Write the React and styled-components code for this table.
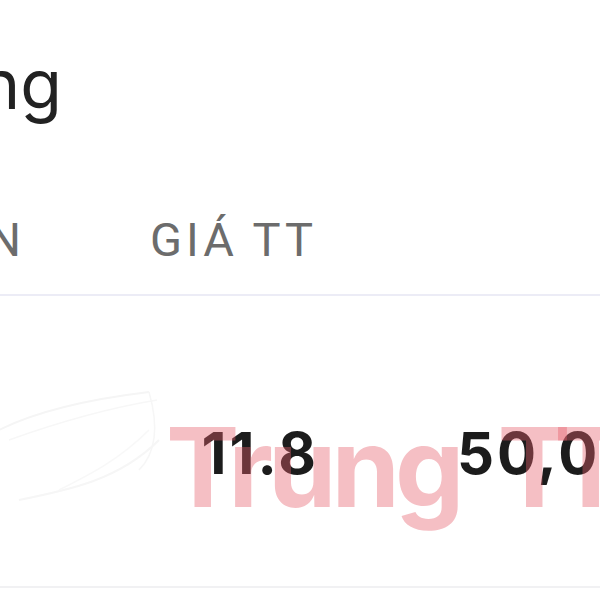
import React from "react";
import styled, { createGlobalStyle } from "styled-components";

const GlobalStyle = createGlobalStyle`
  html, body {
    margin: 0;
    padding: 0;
    background: #ffffff;
    overflow: hidden;
  }
  body {
    font-family: "Inter", "Roboto", "Liberation Sans", sans-serif;
  }
`;

const Page = styled.div`
  position: relative;
  width: 600px;
  height: 600px;
  overflow: hidden;
  background: #ffffff;
`;

const Sheet = styled.div`
  margin-left: -300px;
  width: 1400px;
  padding-top: 50px;
`;

const Title = styled.h1`
  margin: 0;
  width: 362px;
  display: flex;
  justify-content: flex-end;
  font-family: "Inter", "Noto Sans", sans-serif;
  font-weight: 400;
  font-size: 68px;
  line-height: 1;
  color: #222222;
  white-space: nowrap;
`;

const Grid = styled.div`
  display: grid;
  grid-template-columns: 325px 288px 787px;
`;

const HeadRow = styled(Grid)`
  margin-top: 98px;
  padding-bottom: 31px;
  border-bottom: 2px solid #ececf6;
`;

const HeadCell = styled.div`
  justify-self: end;
  margin-right: ${(p) => (p.$shift ? "-4px" : "0")};
  font-family: "Roboto", "Liberation Sans", sans-serif;
  font-weight: 400;
  font-size: 47px;
  line-height: 1;
  letter-spacing: 4px;
  color: #6c6c6c;
  white-space: nowrap;
`;

const BodyRow = styled(Grid)`
  height: 292px;
  align-items: start;
  border-bottom: 2px solid #f1f1f3;
  box-sizing: border-box;
`;

const ImageCell = styled.div`
  justify-self: end;
  margin-top: 74px;
  margin-right: -144px;
  width: 170px;
  height: 140px;
`;

const Num = styled.div`
  justify-self: ${(p) => (p.$align === "start" ? "start" : "end")};
  padding-left: ${(p) => (p.$align === "start" ? "144px" : "0")};
  margin-top: 128px;
  margin-right: ${(p) => (p.$align === "start" ? "0" : "-6px")};
  font-family: "Inter", "Roboto", sans-serif;
  font-weight: 700;
  font-size: 58px;
  letter-spacing: 3px;
  line-height: 1;
  color: #1c1c1c;
  white-space: nowrap;
`;

const Watermark = styled.div`
  position: absolute;
  left: 166px;
  top: 412px;
  display: flex;
  gap: 38px;
  font-family: "Inter", "Roboto", sans-serif;
  font-weight: 700;
  font-size: 110px;
  line-height: 1;
  color: rgba(230, 95, 107, 0.4);
  white-space: nowrap;
  pointer-events: none;
`;

const WatermarkWord = styled.span`
  letter-spacing: ${(p) => p.$spacing};
`;

function ProductSketch() {
  return (
    <svg width="170" height="140" viewBox="0 0 170 140" fill="none">
      <path d="M0 60 C40 40 100 28 150 22" stroke="#f5f5f5" strokeWidth="2" />
      <path d="M10 70 C60 52 110 38 158 30" stroke="#f7f7f7" strokeWidth="1.5" />
      <path d="M150 22 C158 50 160 80 140 100" stroke="#f6f6f6" strokeWidth="1.5" />
      <path d="M20 130 C70 120 120 110 160 70" stroke="#f6f6f6" strokeWidth="2" />
      <path d="M60 120 C90 105 120 90 150 60" stroke="#f8f8f8" strokeWidth="1.5" />
    </svg>
  );
}

export default function App() {
  return (
    <>
      <GlobalStyle />
      <Page>
        <Sheet>
          <Title>Bảng giá vàng</Title>
          <HeadRow>
            <HeadCell>SẢN PHẨM TÊN</HeadCell>
            <HeadCell $shift>GIÁ TT</HeadCell>
            <HeadCell>GIÁ BÁN</HeadCell>
          </HeadRow>
          <BodyRow>
            <ImageCell>
              <ProductSketch />
            </ImageCell>
            <Num>11.8</Num>
            <Num $align="start">50,000,000</Num>
          </BodyRow>
        </Sheet>
        <Watermark>
          <WatermarkWord $spacing="-5px">Trung</WatermarkWord>
          <WatermarkWord $spacing="-17px">TT</WatermarkWord>
        </Watermark>
      </Page>
    </>
  );
}
